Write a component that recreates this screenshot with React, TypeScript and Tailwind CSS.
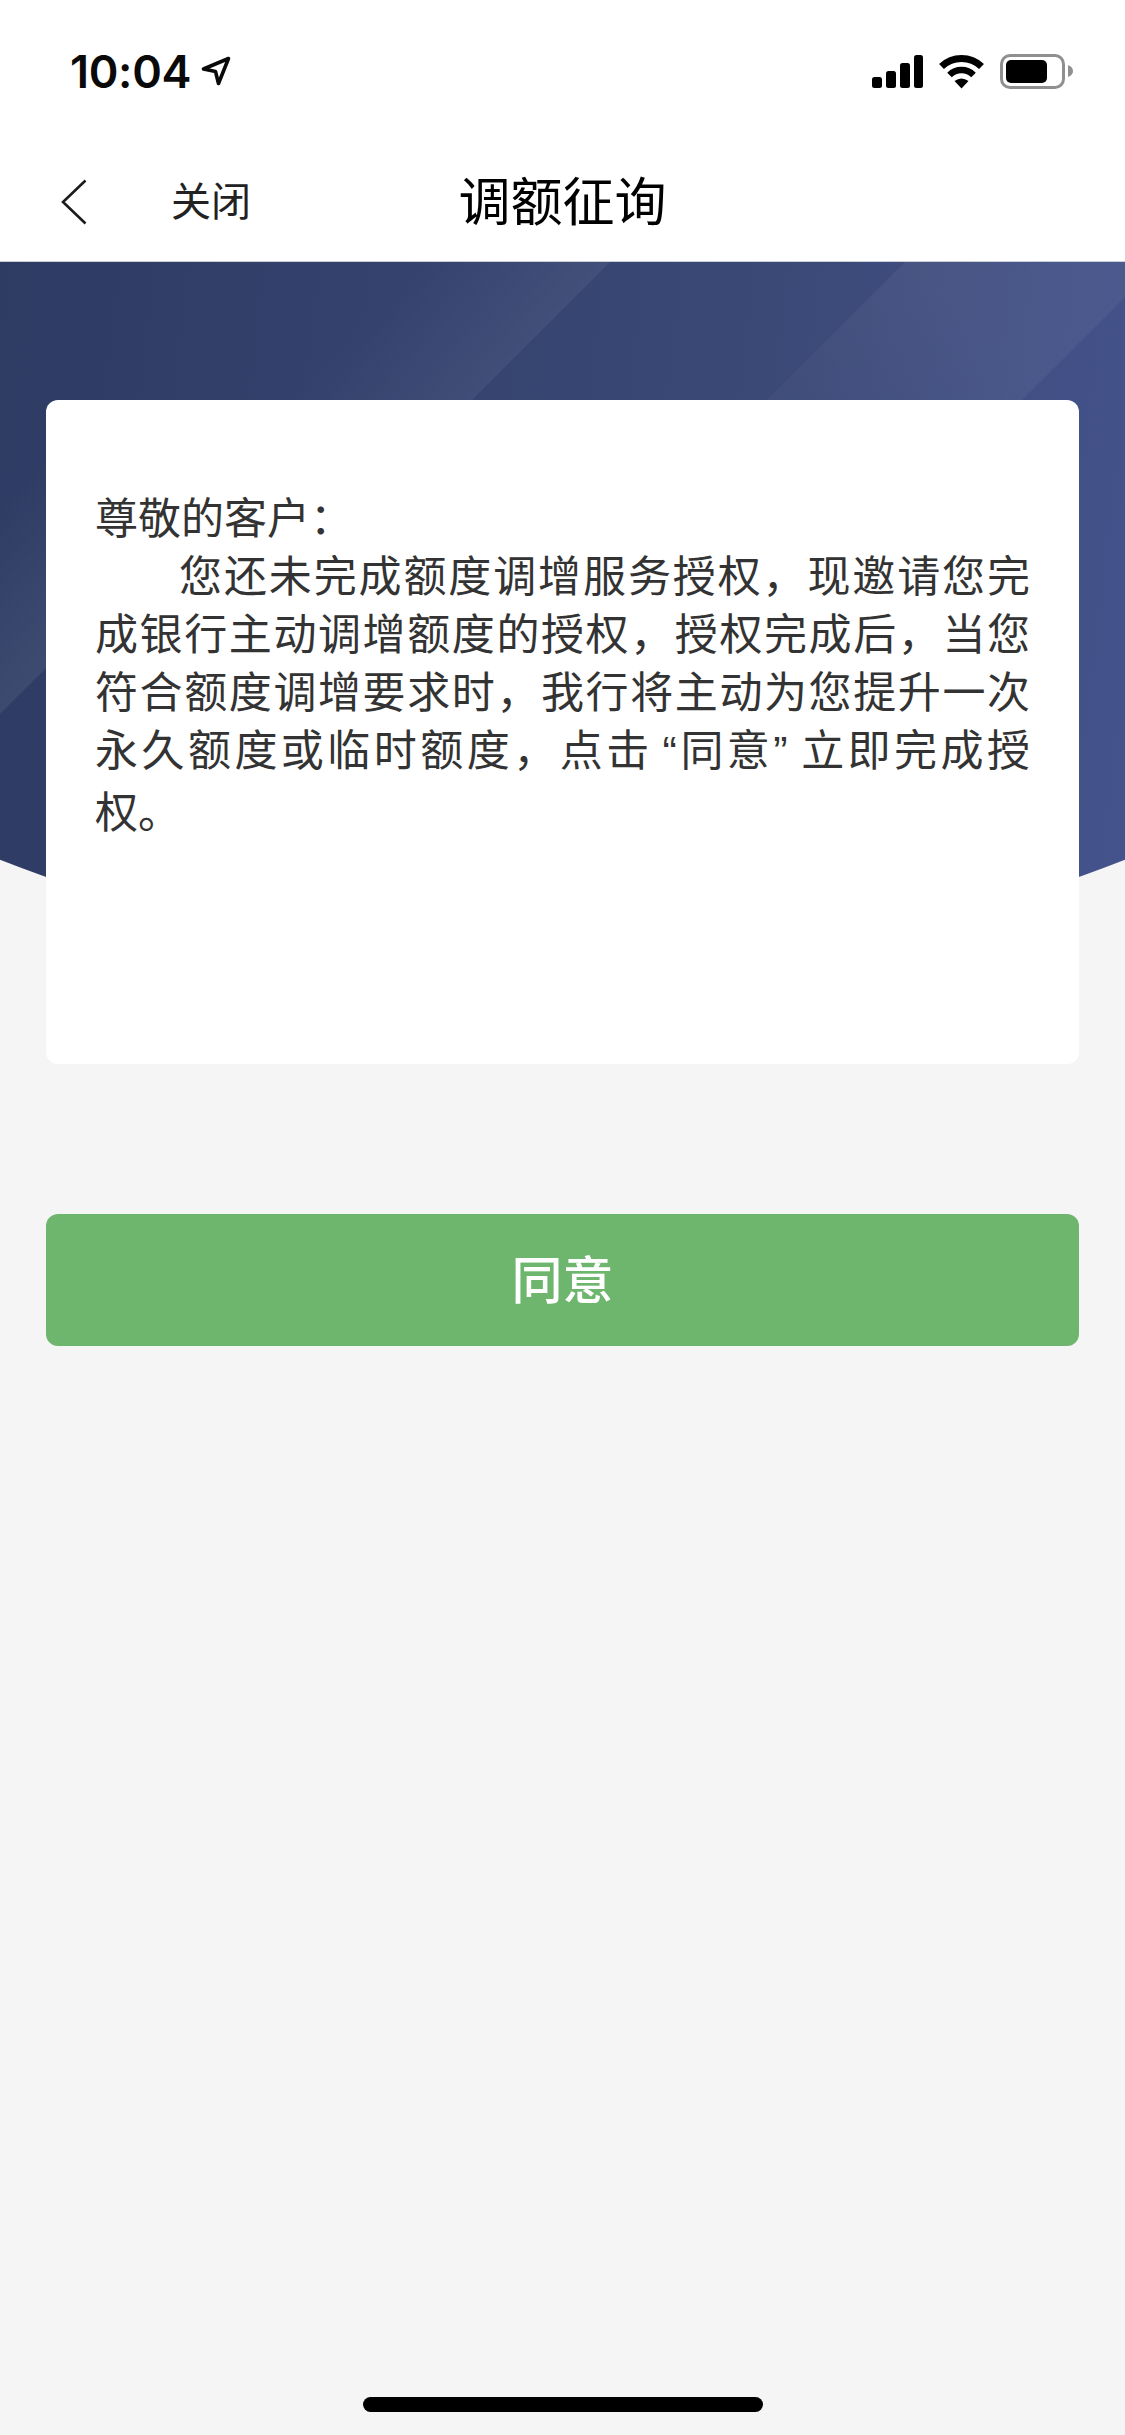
const LINES = [
  "您还未完成额度调增服务授权，现邀请您完",
  "成银行主动调增额度的授权，授权完成后，当您",
  "符合额度调增要求时，我行将主动为您提升一次",
];

function StatusBar() {
  return (
    <div className="flex h-[142px] items-center justify-between pr-[52px] pl-[70px]">
      <div className="flex items-center gap-[10px]">
        <span className="font-['Inter',sans-serif] text-[45px] leading-none font-semibold tracking-[-0.3px] text-[#0a0a0a]">
          10:04
        </span>
        <svg width="30" height="30" viewBox="0 0 30 30" fill="none" aria-hidden>
          <path
            d="M27.5 2.5 L2.5 13 L14.5 15.5 L17.5 27.5 Z"
            stroke="#0a0a0a"
            strokeWidth="3.6"
            strokeLinejoin="round"
          />
        </svg>
      </div>
      <div className="flex items-center gap-[15px]">
        <div className="flex h-[33px] items-end gap-[4px]">
          <span className="h-[11px] w-[10px] rounded-[2.5px] bg-black" />
          <span className="h-[17px] w-[10px] rounded-[2.5px] bg-black" />
          <span className="h-[25px] w-[10px] rounded-[2.5px] bg-black" />
          <span className="h-[33px] w-[9px] rounded-[2.5px] bg-black" />
        </div>
        <svg width="47" height="35" viewBox="0 0 47 35" fill="none" aria-hidden>
          <path d="M3.5 12.5 A29 29 0 0 1 43.5 12.5" stroke="#000" strokeWidth="7" />
          <path d="M11.5 21 A17 17 0 0 1 35.5 21" stroke="#000" strokeWidth="6.5" />
          <path d="M16.5 27 Q23.5 22 30.5 27 L23.5 34.5 Z" fill="#000" />
        </svg>
        <div className="flex items-center gap-[3px]">
          <div className="flex h-[35px] w-[65px] items-center rounded-[10px] border-[3px] border-[#8f8f8f] p-[3px]">
            <div className="h-full w-[41px] rounded-[5px] bg-black" />
          </div>
          <svg width="5" height="12" viewBox="0 0 5 12" aria-hidden>
            <path d="M0 0 Q5 2 5 6 Q5 10 0 12 Z" fill="#8f8f8f" />
          </svg>
        </div>
      </div>
    </div>
  );
}

function NavBar() {
  return (
    <div className="grid h-[120px] grid-cols-[1fr_auto_1fr] items-center border-b border-[#c9ced8] pl-[61px]">
      <div className="flex items-center gap-[84px]">
        <svg width="26" height="46" viewBox="0 0 26 46" fill="none" aria-hidden>
          <path d="M24.5 1.5 L2 23 L24.5 44.5" stroke="#1c1c1c" strokeWidth="2.6" />
        </svg>
        <span className="pb-[5px] text-[40px] leading-none text-[#222]">关闭</span>
      </div>
      <h1 className="-ml-[61px] pb-[5px] text-[52px] leading-none font-normal text-black">调额征询</h1>
      <div />
    </div>
  );
}

function Banner() {
  return (
    <div className="h-[704px] bg-[linear-gradient(97deg,#2e3c64_0%,#33416c_30%,#3a4875_60%,#44538c_100%)] [clip-path:circle(1543px_at_50%_-839px)]">
      <svg className="h-full w-full" viewBox="0 0 1125 704" aria-hidden>
        <defs>
          <linearGradient id="bandA" gradientUnits="userSpaceOnUse" x1="305" y1="305" x2="210" y2="210">
            <stop offset="0" stopColor="#fff" stopOpacity="0.055" />
            <stop offset="1" stopColor="#fff" stopOpacity="0" />
          </linearGradient>
          <linearGradient id="bandB" gradientUnits="userSpaceOnUse" x1="900" y1="0" x2="780" y2="140">
            <stop offset="0" stopColor="#fff" stopOpacity="0.05" />
            <stop offset="1" stopColor="#fff" stopOpacity="0.02" />
          </linearGradient>
          <linearGradient id="bandC" gradientUnits="userSpaceOnUse" x1="226" y1="226" x2="120" y2="120">
            <stop offset="0" stopColor="#fff" stopOpacity="0.07" />
            <stop offset="1" stopColor="#fff" stopOpacity="0" />
          </linearGradient>
        </defs>
        <polygon points="420,0 610,0 472,138 282,138" fill="url(#bandA)" />
        <polygon points="905,0 1125,0 1125,35 1022,138 767,138" fill="url(#bandB)" />
        <polygon points="0,240 102,138 314,138 0,452" fill="url(#bandC)" />
      </svg>
    </div>
  );
}

export default function App() {
  return (
    <div
      lang="zh-CN"
      className="flex h-[2435px] flex-col overflow-hidden bg-[#f5f5f5] font-['Noto_Sans_CJK_SC',sans-serif]"
    >
      <div className="bg-white">
        <StatusBar />
        <NavBar />
      </div>
      <Banner />
      <div className="relative -mt-[566px] flex flex-1 flex-col px-[46px]">
        <div className="h-[664px] rounded-[12px] bg-white px-[49px] pt-[86px] text-[43px] leading-[58px] text-[#333]">
          <p>尊敬的客户：</p>
          {LINES.map((line, i) => (
            <p key={i} className={`[text-align:justify] [text-align-last:justify] ${i === 0 ? "pl-[84px]" : ""}`}>
              {line}
            </p>
          ))}
          <p className="[text-align:justify] [text-align-last:justify]">
            永久额度或临时额度，点击
            <span className="pl-[10px] font-['Liberation_Sans',sans-serif]">“</span>
            同意
            <span className="pr-[10px] font-['Liberation_Sans',sans-serif]">”</span>
            立即完成授
          </p>
          <p>权。</p>
        </div>
        <button
          type="button"
          className="mt-[150px] h-[132px] rounded-[12px] bg-[#6eb66e] pb-[5px] text-[51px] leading-none font-medium text-white"
        >
          同意
        </button>
        <div className="mt-auto mb-[23px] h-[15px] w-[400px] self-center rounded-full bg-black" />
      </div>
    </div>
  );
}
